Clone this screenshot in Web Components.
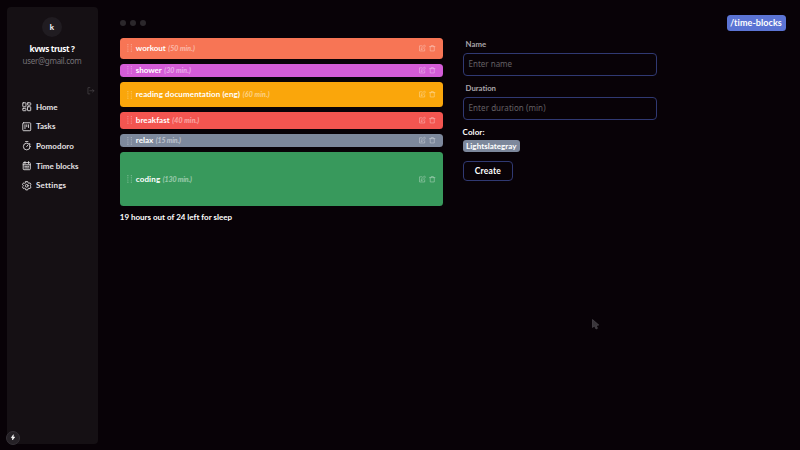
<!DOCTYPE html>
<html lang="en"><head><meta charset="utf-8"><title>Time blocks</title>
<style>html,body{margin:0;background:#080207;height:100%;overflow:hidden}</style></head>
<body><time-blocks-app></time-blocks-app>
<script>
const define = (name, html, setup) => customElements.define(name, class extends HTMLElement {
  connectedCallback() {
    if (this.shadowRoot) return;
    const t = document.createElement('template');
    t.innerHTML = typeof html === 'function' ? html(this) : html;
    this.attachShadow({mode:'open'}).append(t.content.cloneNode(true));
    if (setup) setup(this);
  }
});

/* Label whose tracking is adjusted so that it fills the width in its "w" attribute. */
define('fit-text', `<style>:host{display:inline-block;white-space:nowrap;flex:none}span{display:inline-block}</style><span><slot></slot></span>`, el => {
  const s = el.shadowRoot.querySelector('span'), w = +el.getAttribute('w'), n = el.textContent.length;
  el.style.width = w + 'px';
  s.style.letterSpacing = ((w - s.getBoundingClientRect().width) / n).toFixed(3) + 'px';
});

const icons = {
  home:'<rect x="2" y="2" width="8" height="10" rx="1"/><rect x="14" y="2" width="8" height="6" rx="1"/><rect x="2" y="16" width="8" height="6" rx="1"/><rect x="14" y="12" width="8" height="10" rx="1"/>',
  tasks:'<rect x="2" y="2" width="20" height="20" rx="2"/><path d="M7.500 7v10M12 7v5M16.500 7v7"/>',
  timer:'<circle cx="12" cy="14" r="8.500"/><path d="M9 1.500h6M12 14l3-4M19 6l2 2"/>',
  calendar:'<rect x="3" y="4" width="18" height="18" rx="2"/><path d="M7.500 1.500v5M16.500 1.500v5M3 9.500h18M7 13.500h2M11 13.500h2M15 13.500h2M7 17.500h2M11 17.500h6"/>',
  gear:'<path d="M9.500 1.500h5l.8 3.200 2 1.100 3.100-1 2.500 4.400-2.300 2.200v1.200l2.300 2.200-2.500 4.400-3.100-1-2 1.100-.8 3.200h-5l-.8-3.200-2-1.100-3.100 1L1.100 14.800l2.300-2.200v-1.200L1.100 9.200l2.500-4.400 3.100 1 2-1.100z"/><circle cx="12" cy="12" r="3.500"/>',
  logout:'<path d="M9 2H3v20h6M9 12h13M18 8l4 4-4 4"/>',
  edit:'<path d="M11 3H2v19h19v-8M8 16l1-5L20 0l4 4-11 11z"/>',
  trash:'<path d="M2 6h20M8 6V2h8v4M4.500 6v16h15V6"/>',
  bolt:'<path fill="currentColor" d="M13 2L5 13h5v9l9-12h-6z"/>',
  grip:'<g fill="currentColor" stroke="none"><circle cx="6" cy="2" r="1.900"/><circle cx="17" cy="2" r="1.900"/><circle cx="6" cy="9" r="1.900"/><circle cx="17" cy="9" r="1.900"/><circle cx="6" cy="16" r="1.900"/><circle cx="17" cy="16" r="1.900"/><circle cx="6" cy="23" r="1.900"/><circle cx="17" cy="23" r="1.900"/></g>'
};
define('ui-icon', el => `<style>:host{display:block;flex:none;width:9.500px;height:9.500px}svg{display:block;width:100%;height:100%;overflow:visible}</style><svg viewBox="0 0 24 24" fill="none" stroke="currentColor" stroke-width="2.200" stroke-linejoin="round" stroke-linecap="round">${icons[el.getAttribute('name')]}</svg>`);

define('nav-item', el => `<style>:host{display:flex;align-items:center;gap:5px;height:19.600px;color:#e5e2e5;font:700 8px/12px Lato,sans-serif}</style><ui-icon name="${el.getAttribute('icon')}"></ui-icon><slot></slot>`);

define('side-bar', `<style>
:host{display:flex;flex-direction:column;width:91px;height:437px;box-sizing:border-box;margin:7px 0 0 7px;background:#151014;border-radius:4px;color:#fff;align-items:center;position:relative}
.avatar{width:20px;height:20px;border-radius:50%;background:#201c21;margin:10px 1px 0 0;text-align:center;font:700 8px/20px Lato,sans-serif}
.name{font:700 8.200px/12px "Noto Sans",sans-serif;margin:6px 1px 0 0}
.mail{font:400 8px/12px "Noto Sans",sans-serif;color:#777277;margin-right:1px}
.out{align-self:flex-end;color:#4b464b;width:7.500px;height:7.500px;margin:20px 4px 0 0}
nav{align-self:stretch;padding-left:14.500px;margin-top:2.600px}
.badge{position:absolute;left:-1px;bottom:-.5px;width:12px;height:12px;border-radius:50%;background:#252126;border:.5px solid #343036;display:grid;place-items:center}
.badge ui-icon{width:6px;height:7px}
</style><div class="avatar">k</div><div class="name"><fit-text w="45">kvws trust ?</fit-text></div><div class="mail"><fit-text w="59">user@gmail.com</fit-text></div><ui-icon class="out" name="logout"></ui-icon>
<nav><nav-item icon="home"><fit-text w="21.500">Home</fit-text></nav-item><nav-item icon="tasks"><fit-text w="19.500">Tasks</fit-text></nav-item><nav-item icon="timer"><fit-text w="38">Pomodoro</fit-text></nav-item><nav-item icon="calendar"><fit-text w="42.500">Time blocks</fit-text></nav-item><nav-item icon="gear"><fit-text w="30">Settings</fit-text></nav-item></nav>
<div class="badge"><ui-icon name="bolt"></ui-icon></div>`);

define('time-block', el => {
  const a = n => el.getAttribute(n);
  return `<style>:host{display:flex;align-items:center;box-sizing:border-box;width:322.800px;height:${a('h')}px;background:${a('color')};border-radius:3.500px;padding:0 6.800px .5px 6px;color:#fff;font:700 8px/10px Lato,sans-serif}
.grip{width:7.500px;height:7.500px;opacity:.4;margin-right:2.500px}.min{font:italic 700 7px/10px Lato,sans-serif;opacity:.5;margin-left:2.500px}
.act{margin-left:auto;display:flex;gap:3.500px;opacity:.55}.act ui-icon{width:6.500px;height:6.500px}</style>
<ui-icon class="grip" name="grip"></ui-icon><fit-text w="${a('w')}">${a('label')}</fit-text><fit-text class="min" w="${a('mw')}">(${a('min')} min.)</fit-text><div class="act"><ui-icon name="edit"></ui-icon><ui-icon name="trash"></ui-icon></div>`;
});

define('text-field', el => `<style>:host{display:block;width:194.500px}label{display:block;color:#aaa6aa;font:700 7.800px/10px Lato,sans-serif;padding-left:3px;margin-bottom:3.500px}
.box{height:23.500px;box-sizing:border-box;border:1px solid #303972;border-radius:4px;padding-left:5px;display:flex;align-items:center;color:#646064;font:400 8px/12px "Noto Sans",sans-serif}</style>
<label><fit-text w="${el.getAttribute('lw')}">${el.getAttribute('label')}</fit-text></label><div class="box"><fit-text w="${el.getAttribute('pw')}">${el.getAttribute('placeholder')}</fit-text></div>`);

define('block-form', `<style>:host{display:flex;flex-direction:column;align-items:flex-start;color:#fff;font:700 8px/10px Lato,sans-serif}
text-field+text-field{margin-top:7px}.color{margin-top:7px}
.tag{background:#7d889c;border-radius:3px;height:12.500px;padding:0 3.500px;display:flex;align-items:center;margin-top:2.500px}
.create{width:50.500px;height:20.500px;box-sizing:border-box;border:1px solid #303972;border-radius:4px;margin-top:8.500px;display:flex;align-items:center;justify-content:center;font-size:8.500px}</style>
<text-field label="Name" lw="20.500" placeholder="Enter name" pw="43.500"></text-field><text-field label="Duration" lw="30.500" placeholder="Enter duration (min)" pw="77"></text-field>
<div class="color"><fit-text w="22">Color:</fit-text></div><div class="tag"><fit-text w="50.500">Lightslategray</fit-text></div><div class="create"><fit-text w="26">Create</fit-text></div>`);

define('time-blocks-app', `<style>
:host{display:flex;width:800px;height:450px;background:#080207;position:relative;overflow:hidden;color:#fff}
.main{margin-left:21.800px;width:322.800px;padding-top:20.400px}
.dots{display:flex;gap:4px;height:6px;margin-bottom:11.400px}.dots i{width:6px;height:6px;border-radius:50%;background:#2b272b}
.list{display:flex;flex-direction:column}
.left{font:700 8px/12px Lato,sans-serif;margin-top:4.500px}
block-form{margin:39px 0 0 20px}
.route{margin:15px 14.500px 0 auto;height:16px;width:59px;background:#5b74d4;border-radius:3.500px;display:flex;align-items:center;justify-content:center;font:700 9px/12px Lato,sans-serif}
.cursor{position:absolute;left:592px;top:319px;width:7px;height:11px}
</style><side-bar></side-bar><div class="main"><div class="dots"><i></i><i></i><i></i></div>
<div class="list">
<time-block label="workout" w="30" min="50" mw="26.500" h="21" color="#f77555" style="margin-bottom:5px"></time-block>
<time-block label="shower" w="26" min="30" mw="26.500" h="13" color="#d45cd7" style="margin-bottom:5px"></time-block>
<time-block label="reading documentation (eng)" w="104.500" min="60" mw="27" h="25.500" color="#faa60b" style="margin-bottom:4.500px"></time-block>
<time-block label="breakfast" w="34" min="40" mw="27" h="17" color="#f35550" style="margin-bottom:5px"></time-block>
<time-block label="relax" w="17.500" min="15" mw="25" h="13.500" color="#7d889c" style="margin-bottom:5px"></time-block>
<time-block label="coding" w="24.500" min="130" mw="29" h="54" color="#38995c"></time-block>
</div><div class="left"><fit-text w="112">19 hours out of 24 left for sleep</fit-text></div></div>
<block-form></block-form>
<div class="route"><fit-text w="52">/time-blocks</fit-text></div>
<svg class="cursor" viewBox="0 0 7 11"><path d="M.5.5v8l2-1.500 1.500 3 1.500-.7L4.200 6.500 6.800 6z" fill="#39353a" stroke="#565257" stroke-width=".6"/></svg>`);
</script></body></html>
